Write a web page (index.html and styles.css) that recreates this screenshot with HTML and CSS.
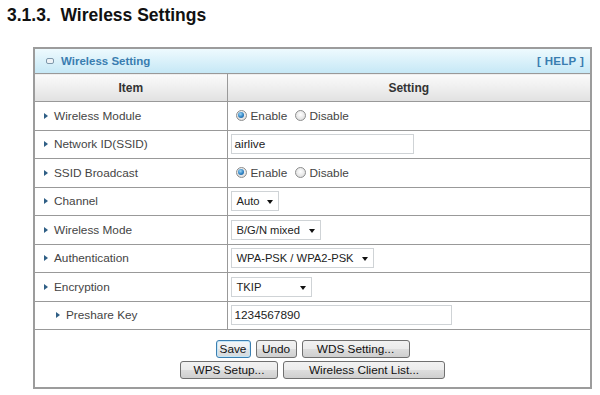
FILE: index.html
```html
<!DOCTYPE html>
<html>
<head>
<meta charset="utf-8">
<link rel="stylesheet" href="styles.css">
</head>
<body>
<h1 class="title">3.1.3.&nbsp;&nbsp;Wireless Settings</h1>
<table class="panel">
  <colgroup><col class="col-item"><col class="col-setting"></colgroup>
  <tr class="bar">
    <td colspan="2">
      <div class="bar-inner">
        <span class="bar-title"><span class="bar-icon"></span>Wireless Setting</span>
        <span class="help">[ HELP ]</span>
      </div>
    </td>
  </tr>
  <tr class="head">
    <th>Item</th>
    <th>Setting</th>
  </tr>
  <tr class="row">
    <td class="label"><span class="tri"></span>Wireless Module</td>
    <td class="value">
      <span class="radio on"></span><span class="rlabel">Enable</span>
      <span class="radio"></span><span class="rlabel">Disable</span>
    </td>
  </tr>
  <tr class="row">
    <td class="label"><span class="tri"></span>Network ID(SSID)</td>
    <td class="value"><span class="field w-ssid">airlive</span></td>
  </tr>
  <tr class="row">
    <td class="label"><span class="tri"></span>SSID Broadcast</td>
    <td class="value">
      <span class="radio on"></span><span class="rlabel">Enable</span>
      <span class="radio"></span><span class="rlabel">Disable</span>
    </td>
  </tr>
  <tr class="row">
    <td class="label"><span class="tri"></span>Channel</td>
    <td class="value"><span class="select w-auto">Auto<span class="arrow"></span></span></td>
  </tr>
  <tr class="row">
    <td class="label"><span class="tri"></span>Wireless Mode</td>
    <td class="value"><span class="select w-mode">B/G/N mixed<span class="arrow"></span></span></td>
  </tr>
  <tr class="row">
    <td class="label"><span class="tri"></span>Authentication</td>
    <td class="value"><span class="select w-auth">WPA-PSK / WPA2-PSK<span class="arrow"></span></span></td>
  </tr>
  <tr class="row">
    <td class="label"><span class="tri"></span>Encryption</td>
    <td class="value"><span class="select w-enc">TKIP<span class="arrow"></span></span></td>
  </tr>
  <tr class="row">
    <td class="label sub"><span class="tri"></span>Preshare Key</td>
    <td class="value"><span class="field w-key">1234567890</span></td>
  </tr>
  <tr class="actions">
    <td colspan="2">
      <div class="btn-line">
        <span class="btn default w-save">Save</span>
        <span class="btn w-undo">Undo</span>
        <span class="btn w-wds">WDS Setting...</span>
      </div>
      <div class="btn-line">
        <span class="btn w-wps">WPS Setup...</span>
        <span class="btn w-client">Wireless Client List...</span>
      </div>
    </td>
  </tr>
</table>
</body>
</html>
```

FILE: styles.css
```css
html, body {
  margin: 0;
  padding: 0;
  background: #ffffff;
}
body {
  font-family: "Liberation Sans", Arial, sans-serif;
  color: #444;
}
.title {
  margin: 4px 0 0 7px;
  font-size: 17.5px;
  line-height: 22px;
  font-weight: bold;
  color: #111;
}
.panel {
  margin: 21px 0 0 33px;
  width: 557px;
  border-collapse: collapse;
  border: 2px solid #9c9c9c;
  table-layout: fixed;
  font-size: 12px;
}
.col-item { width: 193px; }
.col-setting { width: 364px; }
.panel td, .panel th {
  padding: 0;
  border: 1px solid #999;
}
.bar td {
  height: 24px;
  background: linear-gradient(#eefafe, #c6e8f6);
}
.bar-inner {
  display: flex;
  justify-content: space-between;
  align-items: center;
  padding: 0 6px 0 11px;
  color: #3a7db0;
  font-weight: bold;
  font-size: 11.5px;
}
.bar-title {
  display: flex;
  align-items: center;
}
.bar-icon {
  width: 6px;
  height: 4px;
  border: 1px solid #7f98ab;
  border-radius: 2px;
  background: #eef3f7;
  margin-right: 7px;
}
.help { letter-spacing: 0.3px; }
.head th {
  height: 27px;
  background: linear-gradient(#fbfbfb, #e1e1e1);
  color: #333;
  font-size: 12px;
  font-weight: bold;
}
.row td { height: 27.5px; }
.label {
  padding-left: 9px !important;
  font-size: 11.8px;
  color: #444;
  white-space: nowrap;
}
.label.sub { padding-left: 21px !important; }
.tri {
  display: inline-block;
  width: 0;
  height: 0;
  border-top: 3.5px solid transparent;
  border-bottom: 3.5px solid transparent;
  border-left: 4px solid #2f5f85;
  margin-right: 6px;
  vertical-align: 1px;
}
.value {
  padding-left: 3px !important;
  font-size: 11.8px;
  color: #444;
  white-space: nowrap;
}
.radio {
  display: inline-block;
  box-sizing: border-box;
  width: 11px;
  height: 11px;
  border-radius: 50%;
  border: 1px solid #8e8f8f;
  background: radial-gradient(circle at 50% 40%, #ffffff 0%, #e6e6e6 60%, #d0d0d0 100%);
  vertical-align: -1px;
  margin-left: 5px;
  margin-right: 4px;
  position: relative;
}
.radio.on::after {
  content: "";
  position: absolute;
  left: 1.5px;
  top: 1.5px;
  width: 6px;
  height: 6px;
  border-radius: 50%;
  background: radial-gradient(circle at 40% 35%, #9fd6f5 0%, #2d82c4 55%, #1a4f86 100%);
}
.rlabel + .radio { margin-left: 4px; }
.field, .select {
  display: inline-flex;
  align-items: center;
  box-sizing: border-box;
  height: 20px;
  border: 1px solid #cfd3d6;
  background: #fff;
  color: #222;
  font-size: 11.8px;
  padding-left: 3px;
  vertical-align: middle;
  position: relative;
}
.select {
  padding-left: 5px;
  font-size: 11.2px;
}
.arrow {
  position: absolute;
  right: 5px;
  top: 8px;
  width: 0;
  height: 0;
  border-left: 3.5px solid transparent;
  border-right: 3.5px solid transparent;
  border-top: 4px solid #111;
}
.w-ssid { width: 183px; }
.w-key { width: 221px; }
.w-auto { width: 48px; }
.w-mode { width: 90px; }
.w-auth { width: 143px; }
.w-enc { width: 81px; }
.actions td {
  height: 56px;
  padding: 10px 0 8px !important;
  box-sizing: border-box;
  vertical-align: top;
}
.btn-line {
  display: flex;
  justify-content: center;
  gap: 5px;
}
.btn-line + .btn-line { margin-top: 3px; }
.btn {
  display: inline-flex;
  justify-content: center;
  align-items: center;
  box-sizing: border-box;
  height: 18px;
  border: 1px solid #707070;
  border-radius: 3px;
  background: linear-gradient(#f2f2f2 0%, #ebebeb 50%, #dddddd 51%, #cfcfcf 100%);
  color: #111;
  font-size: 11.8px;
}
.btn.default {
  border-color: #3c7fb1;
  box-shadow: inset 0 0 0 1px #c4e6f7;
  background: linear-gradient(#f3f6f8 0%, #eceff1 50%, #e0e4e7 51%, #d4d9dc 100%);
}
.w-save { width: 35px; }
.w-undo { width: 41px; }
.w-wds { width: 108px; }
.w-wps { width: 98px; }
.w-client { width: 162px; }
```
